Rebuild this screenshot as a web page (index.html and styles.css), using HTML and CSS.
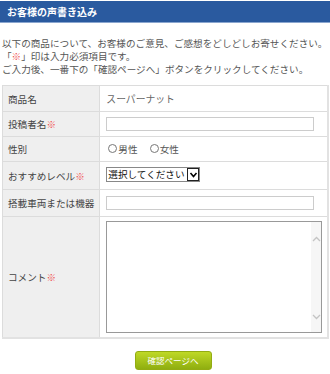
FILE: index.html
```html
<!DOCTYPE html>
<html>
<head>
  <meta charset="utf-8">
  <title>お客様の声書き込み</title>
  <link rel="stylesheet" href="styles.css">
</head>
<body>

  <h2 class="head">お客様の声書き込み</h2>

  <p class="intro">
    以下の商品について、お客様のご意見、ご感想をどしどしお寄せください。<br>
    「<span class="req">※</span>」印は入力必須項目です。<br>
    ご入力後、一番下の「確認ページへ」ボタンをクリックしてください。
  </p>

  <form class="voice">
    <table class="form-table">
      <tr class="r1">
        <th>商品名</th>
        <td class="item">スーパーナット</td>
      </tr>
      <tr class="r2">
        <th>投稿者名<span class="req">※</span></th>
        <td><input type="text" class="txt"></td>
      </tr>
      <tr class="r3">
        <th>性別</th>
        <td>
          <label class="radio"><input type="radio" name="sex">男性</label>
          <label class="radio"><input type="radio" name="sex">女性</label>
        </td>
      </tr>
      <tr class="r4">
        <th>おすすめレベル<span class="req">※</span></th>
        <td>
          <span class="sel">
            <select><option>選択してください</option></select>
            <span class="arrow"><svg width="9" height="9" viewBox="0 0 9 9"><path d="M1.5 3 L4.5 6.5 L7.5 3" fill="none" stroke="#000" stroke-width="1.6"/></svg></span>
          </span>
        </td>
      </tr>
      <tr class="r5">
        <th>搭載車両または機器</th>
        <td><input type="text" class="txt"></td>
      </tr>
      <tr class="r6">
        <th>コメント<span class="req">※</span></th>
        <td>
          <div class="area">
            <textarea></textarea>
            <div class="bar">
              <svg width="9" height="6" viewBox="0 0 9 6"><path d="M1 5 L4.5 1.5 L8 5" fill="none" stroke="#c4c4c4" stroke-width="1.3"/></svg>
              <svg width="9" height="6" viewBox="0 0 9 6"><path d="M1 1 L4.5 4.5 L8 1" fill="none" stroke="#c4c4c4" stroke-width="1.3"/></svg>
            </div>
          </div>
        </td>
      </tr>
    </table>

    <div class="btns">
      <button type="submit" class="confirm">確認ページへ</button>
    </div>
  </form>

</body>
</html>
```

FILE: styles.css
```css
body {
  margin: 0;
  font-family: "Noto Sans CJK JP", "Noto Sans", sans-serif;
  font-size: 9.6px;
  color: #555;
  background: #fff;
}

.head {
  margin: 1px 0 0;
  height: 21px;
  line-height: 21px;
  padding-left: 7px;
  font-size: 10px;
  font-weight: bold;
  color: #fff;
  background: #2a5a9f;
  border-bottom: 1px solid #8aa6cf;
}

.intro {
  margin: 14px 0 0 2px;
  line-height: 13px;
  white-space: nowrap;
}

.req {
  color: #f05050;
}

.voice {
  margin: 9px 2px 0;
}

.form-table {
  width: 100%;
  border-collapse: collapse;
  border: 1px solid #dcdcdc;
  border-right: 2px solid #e2e2e2;
  border-bottom: 2px solid #e2e2e2;
}

.form-table th,
.form-table td {
  border: 1px solid #dcdcdc;
  font-weight: normal;
  text-align: left;
  vertical-align: middle;
  padding: 0 5px;
}

.form-table td {
  padding-left: 6px;
}

.form-table th {
  width: 88px;
  background: #efefef;
  color: #444;
  white-space: nowrap;
}

.r1 { height: 26px; }
.r2 { height: 25px; }
.r3 { height: 25px; }
.r4 { height: 28px; }
.r5 { height: 27px; }
.r6 { height: 121px; }

.item {
  color: #666;
  font-size: 9.8px;
}

.txt {
  display: block;
  width: 208px;
  height: 14px;
  box-sizing: border-box;
  border: 1px solid #ccc;
  margin: 0;
  padding: 0 2px;
}

.radio {
  display: inline-flex;
  align-items: center;
  margin: 0 8px 0 2px;
  color: #555;
}

.radio input {
  appearance: none;
  width: 9px;
  height: 9px;
  margin: 0 1px 0 0;
  border: 1px solid #777;
  border-radius: 50%;
}

.r4 td {
  vertical-align: top;
  padding-top: 5px;
}

.sel {
  display: inline-flex;
  align-items: stretch;
  height: 13px;
  border: 1px solid #888;
  background: #fff;
}

.sel select {
  appearance: none;
  border: none;
  padding: 0 1px;
  margin: 0;
  font-family: inherit;
  font-size: 9.6px;
  color: #111;
  background: #fff;
  width: 80px;
  line-height: 13px;
}

.sel .arrow {
  display: flex;
  align-items: center;
  justify-content: center;
  width: 10px;
  border: 1px solid #222;
  background: #fff;
}

.area {
  display: flex;
  width: 216px;
  height: 112px;
  box-sizing: border-box;
  border: 1px solid #999;
  background: #fff;
}

.area textarea {
  flex: 1;
  border: none;
  resize: none;
  margin: 0;
  outline: none;
}

.bar {
  width: 10px;
  background: #f6f6f6;
  display: flex;
  flex-direction: column;
  justify-content: space-between;
  align-items: center;
  padding: 14px 0 12px;
}

.btns {
  text-align: center;
  margin-top: 12px;
  padding-left: 16px;
}

.confirm {
  width: 77px;
  height: 19px;
  border: 1px solid #93ac12;
  border-radius: 3px;
  background: linear-gradient(#bfd926, #8fae10);
  color: #fff;
  font-family: inherit;
  font-size: 8.5px;
  padding: 0;
  cursor: pointer;
}
```
